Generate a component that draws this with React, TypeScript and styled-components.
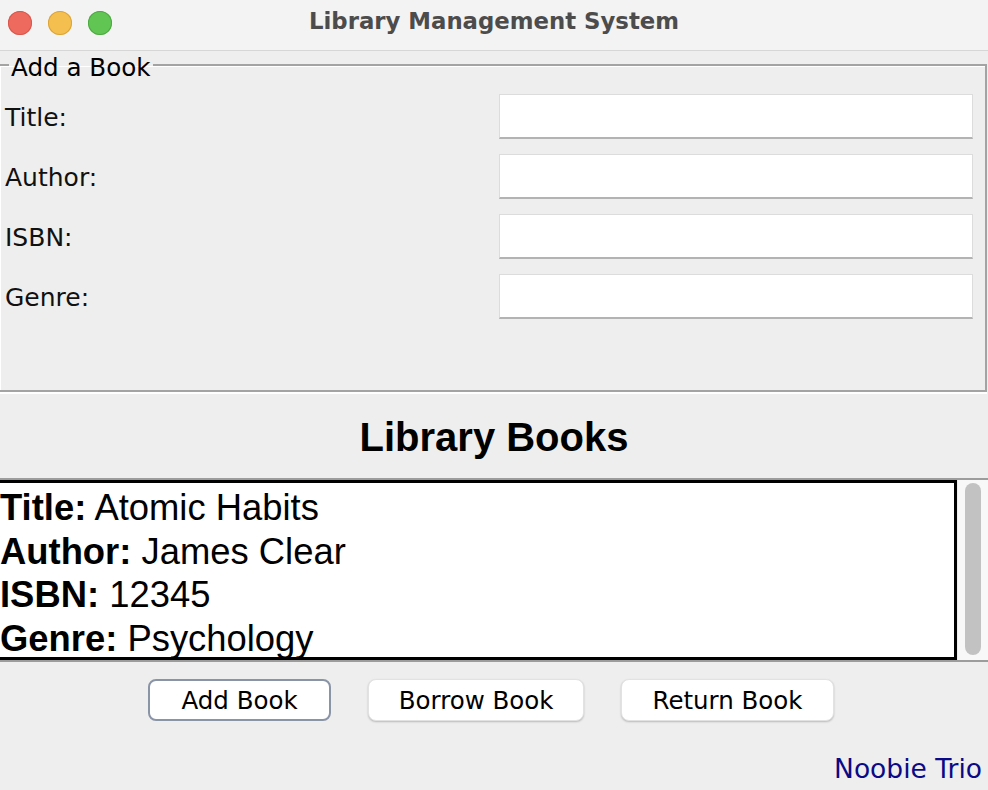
import { createGlobalStyle } from 'styled-components';
import styled from 'styled-components';

const GlobalStyle = createGlobalStyle`
  html, body {
    margin: 0;
    padding: 0;
    background: #eeeeee;
  }
  body {
    font-family: "DejaVu Sans", "Noto Sans", sans-serif;
    overflow: hidden;
  }
`;

const Window = styled.div`
  width: 988px;
  height: 790px;
  display: flex;
  flex-direction: column;
  background: #eeeeee;
  overflow: hidden;
`;

const TitleBar = styled.div`
  height: 50px;
  flex: none;
  display: grid;
  grid-template-columns: 1fr auto 1fr;
  align-items: center;
  background: #f3f3f3;
  border-bottom: 1px solid #d6d6d6;
`;

const Lights = styled.div`
  display: flex;
  gap: 16px;
  padding-left: 8px;
  margin-top: -5px;
`;

const Light = styled.span<{ $fill: string; $edge: string }>`
  width: 24px;
  height: 24px;
  border-radius: 50%;
  background: ${(p) => p.$fill};
  box-shadow: inset 0 0 0 1px ${(p) => p.$edge};
`;

const WindowTitle = styled.div`
  font-family: "DejaVu Sans", sans-serif;
  font-weight: bold;
  font-size: 22.8px;
  color: #4c4c4c;
  margin-top: -8px;
`;

const FormBox = styled.fieldset`
  margin: -2px 1px 0 -2px;
  padding: 0;
  min-width: 0;
  border: 2px solid #a3a3a3;
  box-shadow: inset 1px 1px 0 #ffffff, 0 2px 0 #ffffff;
  flex: none;
`;

const Legend = styled.legend`
  margin-left: 9px;
  padding: 6px 2px 0 2px;
  font-size: 24.6px;
  line-height: 26px;
  color: #000;
`;

const FormGrid = styled.div`
  display: grid;
  grid-template-columns: 1fr 474px;
  grid-template-rows: repeat(5, 60px);
  padding: 5px 12px 4px 5px;
`;

const Label = styled.label`
  align-self: center;
  padding-top: 3px;
  font-size: 25px;
  color: #111;
`;

const Field = styled.input`
  align-self: center;
  height: 45px;
  box-sizing: border-box;
  margin: 0;
  padding: 0 6px;
  background: #ffffff;
  border: 1px solid #dcdcdc;
  border-bottom: 2px solid #b3b3b3;
  font-size: 22px;
  outline: none;
`;

const Heading = styled.h2`
  margin: 0;
  height: 86px;
  flex: none;
  display: flex;
  align-items: center;
  justify-content: center;
  padding-top: 5px;
  box-sizing: border-box;
  font-family: "Liberation Sans", Arial, sans-serif;
  font-weight: bold;
  font-size: 40px;
  color: #000;
`;

const ScrollPane = styled.div`
  height: 184px;
  flex: none;
  display: flex;
  border-top: 2px solid #9c9c9c;
  border-bottom: 2px solid #9c9c9c;
  box-sizing: border-box;
`;

const BookText = styled.div`
  flex: 1;
  background: #ffffff;
  border: 3px solid #000;
  border-left: none;
  padding-top: 3px;
  overflow: hidden;
  font-family: "Liberation Sans", Arial, sans-serif;
  font-size: 36.4px;
  line-height: 43.5px;
  color: #000;
`;

const BookLine = styled.div`
  white-space: nowrap;
`;

const Key = styled.b`
  font-weight: bold;
`;

const ScrollTrack = styled.div`
  width: 31px;
  flex: none;
  background: #f8f8f8;
  border-left: 1px solid #ececec;
  display: flex;
  justify-content: center;
  padding: 3px 0 5px 0;
  box-sizing: border-box;
`;

const ScrollThumb = styled.div`
  width: 16px;
  height: 100%;
  border-radius: 8px;
  background: #c2c2c2;
`;

const Footer = styled.div`
  flex: 1;
  display: flex;
  flex-direction: column;
  padding: 17px 6px 0 0;
`;

const ButtonRow = styled.div`
  display: flex;
  justify-content: center;
  gap: 37px;
`;

const Button = styled.button<{ $focused?: boolean }>`
  height: 42px;
  padding: 0 ${(p) => (p.$focused ? 31 : 30)}px;
  font-family: "DejaVu Sans", sans-serif;
  font-size: 24.5px;
  color: #000;
  background: #ffffff;
  border-radius: 8px;
  border: ${(p) => (p.$focused ? '2px solid #8a94a7' : '1px solid #e2e2e2')};
  box-shadow: ${(p) => (p.$focused ? 'none' : '0 1px 2px rgba(0, 0, 0, 0.22)')};
  cursor: pointer;
`;

const Credit = styled.div`
  margin-top: auto;
  margin-bottom: 6px;
  align-self: flex-end;
  font-size: 26.5px;
  color: #0a0a86;
`;

const fields = ['Title:', 'Author:', 'ISBN:', 'Genre:'];

const book = [
  ['Title:', 'Atomic Habits'],
  ['Author:', 'James Clear'],
  ['ISBN:', '12345'],
  ['Genre:', 'Psychology'],
];

export default function App() {
  return (
    <>
      <GlobalStyle />
      <Window>
        <TitleBar>
          <Lights>
            <Light $fill="#ee6a5f" $edge="#d8574c" />
            <Light $fill="#f5bf4f" $edge="#dba43a" />
            <Light $fill="#61c554" $edge="#4ea843" />
          </Lights>
          <WindowTitle>Library Management System</WindowTitle>
          <span />
        </TitleBar>

        <FormBox>
          <Legend>Add a Book</Legend>
          <FormGrid>
            {fields.map((f) => [
              <Label key={f}>{f}</Label>,
              <Field key={f + 'in'} />,
            ])}
          </FormGrid>
        </FormBox>

        <Heading>Library Books</Heading>

        <ScrollPane>
          <BookText>
            {book.map(([k, v]) => (
              <BookLine key={k}>
                <Key>{k}</Key> {v}
              </BookLine>
            ))}
          </BookText>
          <ScrollTrack>
            <ScrollThumb />
          </ScrollTrack>
        </ScrollPane>

        <Footer>
          <ButtonRow>
            <Button $focused>Add Book</Button>
            <Button>Borrow Book</Button>
            <Button>Return Book</Button>
          </ButtonRow>
          <Credit>Noobie Trio</Credit>
        </Footer>
      </Window>
    </>
  );
}
